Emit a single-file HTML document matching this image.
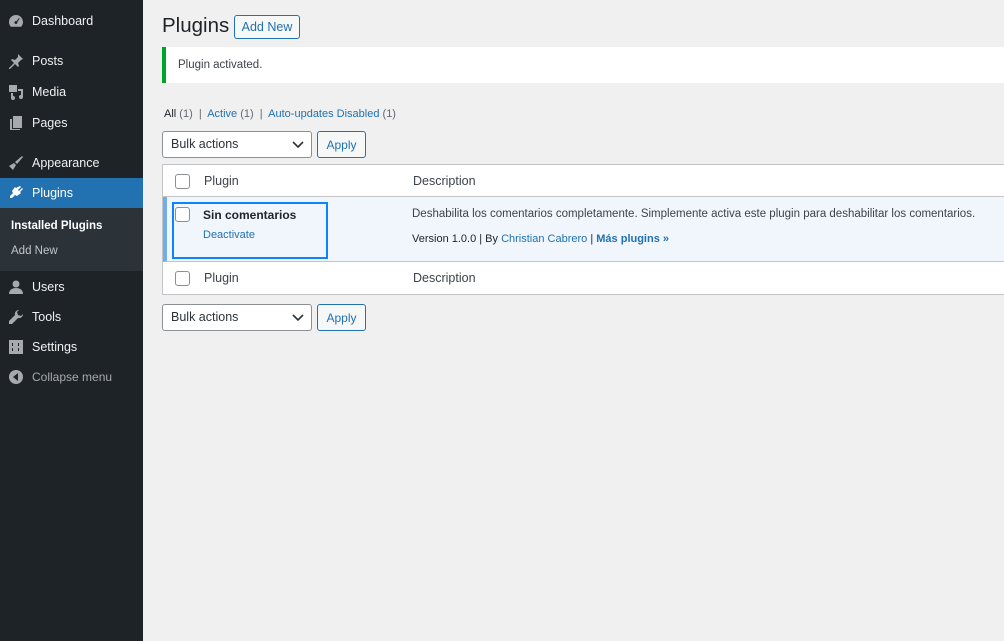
<!DOCTYPE html>
<html><head><meta charset="utf-8"><style>
*{box-sizing:border-box;margin:0;padding:0}
body{width:1004px;height:641px;overflow:hidden;background:#f0f0f1;font-family:"Liberation Sans",sans-serif;font-size:13px;color:#3c434a;position:relative}
#side{position:absolute;left:0;top:0;width:143px;height:641px;background:#1d2327}
.mi{position:absolute;left:0;width:143px;height:30px;color:#f0f0f1;font-size:12.5px;line-height:30px;padding-left:32px;white-space:nowrap}
.ic{position:absolute;left:8px;top:7px;width:16px;height:16px;fill:#a7aaad}
.act{background:#2271b1;color:#fff}
.act .ic{fill:#fff}
.sub{position:absolute;left:0;top:208px;width:143px;height:63px;background:#2c3338}
.sub div{position:absolute;left:11px;font-size:11.5px}
a{color:#2271b1;text-decoration:none}
.btn{position:absolute;border:1px solid #2271b1;color:#2271b1;background:#f6f7f7;border-radius:3px;font-size:12px;text-align:center;white-space:nowrap}
.sel{position:absolute;width:150px;height:27px;border:1px solid #8c8f94;border-radius:3px;background:#fff;font-size:12.5px;line-height:25px;padding-left:8px;color:#2c3338}
.sel svg{position:absolute;right:7px;top:9px}
.cb{position:absolute;width:15px;height:15px;border:1px solid #8c8f94;border-radius:3px;background:#fff}
</style></head><body>
<div id="side">
<div class="mi" style="top:6px"><svg class="ic" viewBox="0 0 16 16"><path d="M8 2a7 7 0 0 0-7 7c0 2 .8 3.6 2 4.8h10A7 7 0 0 0 8 2zm0 9a1.5 1.5 0 1 1 .5-2.9L11 5l.7.6L9.3 9A1.5 1.5 0 0 1 8 11z"/></svg>Dashboard</div>
<div class="mi" style="top:46px"><svg class="ic" viewBox="0 0 16 16"><path d="M10 1l5 5-2 1-3 3 1 3-1 1-3-3-5 5-1 0 0-1 5-5-3-3 1-1 3 1 3-3z"/></svg>Posts</div>
<div class="mi" style="top:77px"><svg class="ic" viewBox="0 0 16 16"><path d="M1 1h8v7H1zM10 5h5v8a2 2 0 1 1-2-2V7h-3zM3 9v5a2 2 0 1 0 2-2V9z"/></svg>Media</div>
<div class="mi" style="top:108px"><svg class="ic" viewBox="0 0 16 16"><path d="M5 1h9v12H5zM2 4h2v10h8v1H2z"/></svg>Pages</div>
<div class="mi" style="top:148px"><svg class="ic" viewBox="0 0 16 16"><path d="M14 1l1 1-6 7-2-2zM6 8l2 2-3 5-4-4z"/></svg>Appearance</div>
<div class="mi act" style="top:178px"><svg class="ic" viewBox="0 0 16 16"><path d="M12 1l1 1-3 3 1 1 3-3 1 1-3 3 1 1-4 3-2-1-3 3-2 0 0-2 3-3-1-2 3-4 1 1z"/></svg>Plugins</div>
<div style="position:absolute;left:136px;top:186px;width:0;height:0;border:7px solid transparent;border-right-color:#f0f0f1"></div>
<div class="sub"><div style="top:12px;color:#fff;font-weight:bold">Installed Plugins</div><div style="top:37px;color:#c3c4c7">Add New</div></div>
<div class="mi" style="top:272px"><svg class="ic" viewBox="0 0 16 16"><circle cx="8" cy="5" r="3.5"/><path d="M1 15c0-4 3-6 7-6s7 2 7 6z"/></svg>Users</div>
<div class="mi" style="top:302px"><svg class="ic" viewBox="0 0 16 16"><path d="M11 1a4 4 0 0 0-4 5L1 12v3h3l6-6a4 4 0 0 0 5-4l-2 2-3-1-1-3z"/></svg>Tools</div>
<div class="mi" style="top:332px"><svg class="ic" viewBox="0 0 16 16"><path d="M1 1h14v14H1zM4 4v8h1V4zm6 0v8h1V4zM3 7h3v2H3zm6 0h3v2H9z"/></svg>Settings</div>
<div class="mi" style="top:362px;color:#a7aaad;font-size:12px"><svg class="ic" viewBox="0 0 16 16"><circle cx="8" cy="8" r="7"/><path d="M10 4v8L5 8z" fill="#1d2327"/></svg>Collapse menu</div>
</div>

<div style="position:absolute;left:162px;top:14px;font-size:20.5px;color:#1d2327">Plugins</div>
<div class="btn" style="left:234px;top:15px;width:66px;height:24px;line-height:22px;font-size:12.5px">Add New</div>

<div style="position:absolute;left:162px;top:47px;width:842px;height:36px;background:#fff;border-left:4px solid #00a32a;font-size:11.5px;line-height:36px;padding-left:12px;color:#3c434a">Plugin activated.</div>

<div style="position:absolute;left:164px;top:108px;font-size:11px;color:#646970"><span style="color:#1d2327">All</span> (1) &nbsp;|&nbsp; <a>Active</a> (1) &nbsp;|&nbsp; <a>Auto-updates Disabled</a> (1)</div>

<div class="sel" style="left:162px;top:131px">Bulk actions<svg width="12" height="8" viewBox="0 0 12 8"><path d="M1 1l5 5 5-5" stroke="#2c3338" stroke-width="1.6" fill="none"/></svg></div>
<div class="btn" style="left:317px;top:131px;width:49px;height:27px;line-height:26px">Apply</div>

<div style="position:absolute;left:162px;top:164px;width:842px;height:131px;background:#fff;border:1px solid #c3c4c7;border-right:none">
 <div style="position:absolute;left:0;top:0;width:842px;height:32px;border-bottom:1px solid #c3c4c7"></div>
 <div class="cb" style="left:12px;top:9px"></div>
 <div style="position:absolute;left:41px;top:9px;font-size:12.5px">Plugin</div>
 <div style="position:absolute;left:250px;top:9px;font-size:12.5px">Description</div>
 <div style="position:absolute;left:0;top:32px;width:842px;height:65px;background:#f0f6fc;border-left:4px solid #72aee6;border-bottom:1px solid #c3c4c7"></div>
 <div style="position:absolute;left:9px;top:37px;width:156px;height:57px;border:2px solid #0a84ff"></div>
 <div class="cb" style="left:12px;top:42px"></div>
 <div style="position:absolute;left:40px;top:43px;font-size:12px;font-weight:bold;color:#1d2327">Sin comentarios</div>
 <div style="position:absolute;left:40px;top:64px;font-size:11px"><a>Deactivate</a></div>
 <div style="position:absolute;left:249px;top:43px;font-size:11.5px;color:#3c434a">Deshabilita los comentarios completamente. Simplemente activa este plugin para deshabilitar los comentarios.</div>
 <div style="position:absolute;left:249px;top:68px;font-size:11px;color:#1d2327">Version 1.0.0 | By <a>Christian Cabrero</a> | <a style="font-weight:bold">Más plugins »</a></div>
 <div class="cb" style="left:12px;top:106px"></div>
 <div style="position:absolute;left:41px;top:106px;font-size:12.5px">Plugin</div>
 <div style="position:absolute;left:250px;top:106px;font-size:12.5px">Description</div>
</div>

<div class="sel" style="left:162px;top:304px">Bulk actions<svg width="12" height="8" viewBox="0 0 12 8"><path d="M1 1l5 5 5-5" stroke="#2c3338" stroke-width="1.6" fill="none"/></svg></div>
<div class="btn" style="left:317px;top:304px;width:49px;height:27px;line-height:26px">Apply</div>
</body></html>
